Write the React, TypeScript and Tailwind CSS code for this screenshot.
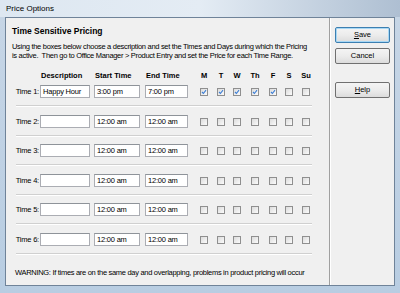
const days = ["M", "T", "W", "Th", "F", "S", "Su"];
const dayGap = ["ml-[12px]", "ml-[9px]", "ml-[8px]", "ml-[10px]", "ml-[10px]", "ml-[8px]", "ml-[9px]"];

type Row = {
  label: string;
  desc: string;
  start: string;
  end: string;
  checked: boolean[];
};

const rows: Row[] = [
  { label: "Time 1:", desc: "Happy Hour", start: "3:00 pm", end: "7:00 pm", checked: [true, true, true, true, true, false, false] },
  { label: "Time 2:", desc: "", start: "12:00 am", end: "12:00 am", checked: [false, false, false, false, false, false, false] },
  { label: "Time 3:", desc: "", start: "12:00 am", end: "12:00 am", checked: [false, false, false, false, false, false, false] },
  { label: "Time 4:", desc: "", start: "12:00 am", end: "12:00 am", checked: [false, false, false, false, false, false, false] },
  { label: "Time 5:", desc: "", start: "12:00 am", end: "12:00 am", checked: [false, false, false, false, false, false, false] },
  { label: "Time 6:", desc: "", start: "12:00 am", end: "12:00 am", checked: [false, false, false, false, false, false, false] },
];

const Field = ({ value, width }: { value: string; width: string }) => (
  <div className={`${width} h-[13px] shrink-0 bg-white border border-[#abadb3] border-t-[#8e9399] pl-[2px] text-[7.5px] leading-[11px] tracking-[-0.2px] text-black whitespace-nowrap overflow-hidden`}>
    {value}
  </div>
);

const Check = ({ on }: { on: boolean }) => (
  <div className="w-[8px] h-[8px] shrink-0 border border-[#8f8f8f] bg-gradient-to-br from-[#dcdcdc] to-[#fbfbfb] flex items-center justify-center">
    {on && (
      <svg width="6" height="6" viewBox="0 0 6 6">
        <path d="M1 3 L2.4 4.5 L5 1.2" fill="none" stroke="#3d7fd6" strokeWidth="1.1" />
      </svg>
    )}
  </div>
);

const Button = ({ children, primary }: { children: React.ReactNode; primary?: boolean }) => (
  <div
    className={`w-[55px] h-[16px] shrink-0 rounded-[2px] border flex items-center justify-center text-[7.5px] text-black bg-gradient-to-b from-[#f4f4f4] via-[#ececec] to-[#dcdcdc] ${
      primary ? "border-[#3c7fb1] shadow-[inset_0_0_0_1px_#a8d8f5]" : "border-[#707070]"
    }`}
  >
    {children}
  </div>
);

export default function App() {
  return (
    <div className="w-[400px] h-[293px] flex flex-col bg-gradient-to-b from-[#c7d6e6] to-[#b8cde2] overflow-hidden" style={{ fontFamily: '"Liberation Sans", Arial, sans-serif' }}>
      {/* Title bar */}
      <div className="h-[17px] shrink-0 flex items-center pl-[6px] bg-gradient-to-r from-[#dde7f1] via-[#e4ecf4] to-[#aebfd2]">
        <span className="text-[8px] text-black leading-none">Price Options</span>
      </div>

      {/* Client */}
      <div className="flex-1 flex mx-[5px] mb-[7px] border border-[#6f8399] bg-[#f0f0f0] min-h-0">
        {/* Left pane */}
        <div className="w-[323px] shrink-0 flex flex-col pl-[6px] pt-[8px]">
          <div className="text-[8.5px] font-bold leading-[11px] text-black">Time Sensitive Pricing</div>
          <div className="mt-[5px] text-[7.5px] leading-[9px] tracking-[-0.3px] text-black whitespace-nowrap">
            <div>Using the boxes below choose a description and set the Times and Days during which the Pricing</div>
            <div>is active.&nbsp; Then go to Office Manager &gt; Product Entry and set the Price for each Time Range.</div>
          </div>

          {/* Column headers */}
          <div className="mt-[11px] flex text-[7.5px] font-bold leading-[9px] text-black whitespace-nowrap">
            <div className="w-[28px] shrink-0" />
            <div className="w-[50px] shrink-0 pl-[1px]">Description</div>
            <div className="w-[46px] shrink-0 ml-[4px] pl-[1px]">Start Time</div>
            <div className="w-[43px] shrink-0 ml-[5px] pl-[1px]">End Time</div>
            {days.map((d, i) => (
              <div key={d} className={`w-[8px] shrink-0 flex justify-center ${dayGap[i]}`}>
                {d}
              </div>
            ))}
          </div>

          {/* Rows */}
          <div className="mt-[5px] flex flex-col">
            {rows.map((r, idx) => (
              <div key={r.label} className={idx === 0 ? "" : idx % 2 === 1 ? "pt-[8px]" : "pt-[7px]"}>
                <div className="flex items-center">
                  <div className="w-[28px] shrink-0 text-right pr-[1px] text-[7.5px] leading-[9px] tracking-[-0.2px] text-black whitespace-nowrap">
                    {r.label}
                  </div>
                  <Field value={r.desc} width="w-[50px]" />
                  <div className="ml-[4px]">
                    <Field value={r.start} width="w-[46px]" />
                  </div>
                  <div className="ml-[5px]">
                    <Field value={r.end} width="w-[43px]" />
                  </div>
                  {r.checked.map((c, i) => (
                    <div key={i} className={dayGap[i]}>
                      <Check on={c} />
                    </div>
                  ))}
                </div>
                <div className="mt-[7px] ml-[4px] w-[296px] h-[2px] border-t border-[#d0d0d0] border-b border-b-white" />
              </div>
            ))}
          </div>

          <div className="mt-[13px] pl-[3px] text-[7.5px] leading-[9px] tracking-[-0.3px] text-black whitespace-nowrap">
            WARNING: If times are on the same day and overlapping, problems in product pricing will occur
          </div>
        </div>

        {/* Divider */}
        <div className="w-[2px] shrink-0 border-l border-[#a0a0a0] border-r border-r-white" />

        {/* Right pane */}
        <div className="flex-1 flex flex-col items-start pl-[4px] pt-[9px]">
          <Button primary>
            <span className="underline">S</span>ave
          </Button>
          <div className="mt-[5px]">
            <Button>Cancel</Button>
          </div>
          <div className="mt-[18px]">
            <Button>
              <span className="underline">H</span>elp
            </Button>
          </div>
        </div>
      </div>
    </div>
  );
}
